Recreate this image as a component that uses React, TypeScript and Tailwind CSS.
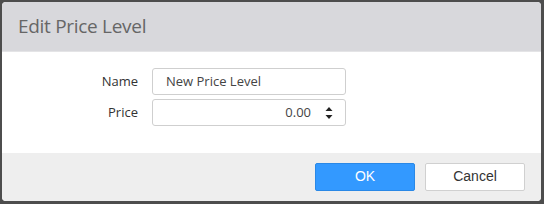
import * as React from 'react'

const App: React.FC = () => {
  return (
    <div className="w-[544px] h-[204px] bg-[#4d4d4d] pl-[2px] pt-[2px] pr-[3px] pb-[3px]">
      <div className="w-full h-full rounded-[4px] overflow-hidden flex flex-col bg-white">
        {/* Header */}
        <div className="h-[50px] bg-[#d8d8dc] border-b border-[#e4e4e6] flex items-center pl-[16px]">
          <span className="text-[19px] text-[#666] font-['Open_Sans',sans-serif] tracking-[-0.3px]">
            Edit Price Level
          </span>
        </div>

        {/* Body */}
        <div className="h-[101px] bg-white pt-[16px] flex flex-col gap-[4px] font-['Open_Sans',sans-serif] text-[13px]">
          <div className="flex items-center">
            <label className="w-[136px] text-right text-[#333]">Name</label>
            <div className="ml-[14px] w-[194px] h-[27px] border border-[#cfcfcf] rounded-[3px] flex items-center px-[13px] text-[#444]">
              New Price Level
            </div>
          </div>
          <div className="flex items-center">
            <label className="w-[136px] text-right text-[#333]">Price</label>
            <div className="ml-[14px] w-[194px] h-[27px] border border-[#cfcfcf] rounded-[3px] flex items-center justify-end pr-[12px] text-[#444]">
              <span>0.00</span>
              <svg className="ml-[14px]" width="8" height="14" viewBox="0 0 8 14">
                <path d="M4 1L7.5 5H0.5Z" fill="#222" />
                <path d="M4 13L7.5 9H0.5Z" fill="#222" />
              </svg>
            </div>
          </div>
        </div>

        {/* Footer */}
        <div className="flex-1 bg-[#eeeeee] flex items-center justify-end gap-[10px] pr-[16px] pb-[1px] font-['Liberation_Sans',Arial,sans-serif] text-[14px]">
          <button className="w-[100px] h-[28px] bg-[#3399ff] border border-[#2a88e6] rounded-[2px] text-white">
            OK
          </button>
          <button className="w-[100px] h-[28px] bg-white border border-[#d0d0d0] rounded-[2px] text-[#333]">
            Cancel
          </button>
        </div>
      </div>
    </div>
  )
}

export default App
